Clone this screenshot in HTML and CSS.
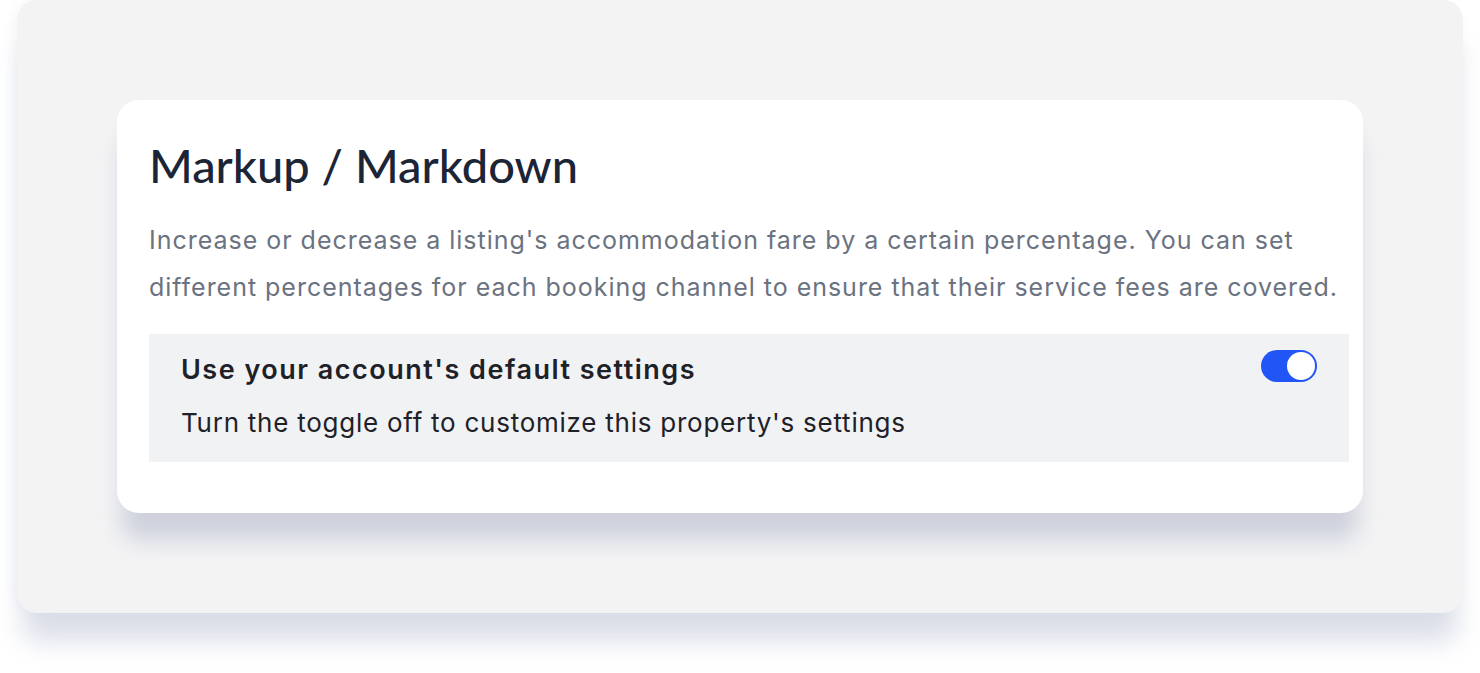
FILE: index.html
```html
<!DOCTYPE html>
<html lang="en">
<head>
<meta charset="utf-8">
<title>Markup / Markdown</title>
<link rel="stylesheet" href="styles.css">
</head>
<body>
<div class="panel">
  <section class="card">
    <h1 class="title">Markup / Markdown</h1>
    <p class="desc">Increase or decrease a listing's accommodation fare by a certain percentage. You can set different percentages for each booking channel to ensure that their service fees are covered.</p>
    <div class="setting">
      <div class="setting-text">
        <div class="setting-title">Use your account's default settings</div>
        <div class="setting-sub">Turn the toggle off to customize this property's settings</div>
      </div>
      <div class="toggle" role="switch" aria-checked="true"><span class="knob"></span></div>
    </div>
  </section>
</div>
</body>
</html>
```

FILE: styles.css
```css
* { box-sizing: border-box; }
html, body { height: 100%; }
body {
  margin: 0;
  padding: 0 17px;
  background: #ffffff;
  font-family: Inter, "Open Sans", sans-serif;
  overflow: hidden;
}
.panel {
  background: #f3f3f4;
  border-radius: 20px;
  padding: 100px;
  height: 613px;
  box-shadow: 0 34px 26px -6px rgba(175, 182, 205, 0.45), -4px 0 10px rgba(190, 195, 210, 0.12);
}
.card {
  background: #ffffff;
  border-radius: 22px;
  padding: 36px 0 0 32px;
  height: 413px;
  box-shadow: 0 32px 22px -6px rgba(170, 176, 198, 0.5);
}
.title {
  margin: 0;
  font-family: Lato, "Open Sans", sans-serif;
  font-size: 47px;
  font-weight: 500;
  line-height: 58px;
  color: #1c2536;
}
.desc {
  margin: 23px 0 0;
  font-size: 25px;
  letter-spacing: 0.98px;
  line-height: 47px;
  color: #6b7280;
}
.setting {
  margin: 23px 14px 0 0;
  background: #f1f2f4;
  height: 128px;
  display: flex;
  justify-content: space-between;
  align-items: flex-start;
  padding: 16px 32px 0 32px;
}
.setting-title {
  font-size: 27px;
  font-weight: 600;
  letter-spacing: 1.5px;
  line-height: 40px;
  color: #1f2128;
}
.setting-sub {
  margin-top: 16px;
  font-size: 26px;
  letter-spacing: 0.75px;
  line-height: 34px;
  color: #1f2128;
}
.toggle {
  width: 56px;
  height: 32px;
  border-radius: 16px;
  background: #2255f5;
  position: relative;
  flex: none;
}
.knob {
  position: absolute;
  top: 2px;
  right: 2px;
  width: 28px;
  height: 28px;
  border-radius: 50%;
  background: #ffffff;
}
```
